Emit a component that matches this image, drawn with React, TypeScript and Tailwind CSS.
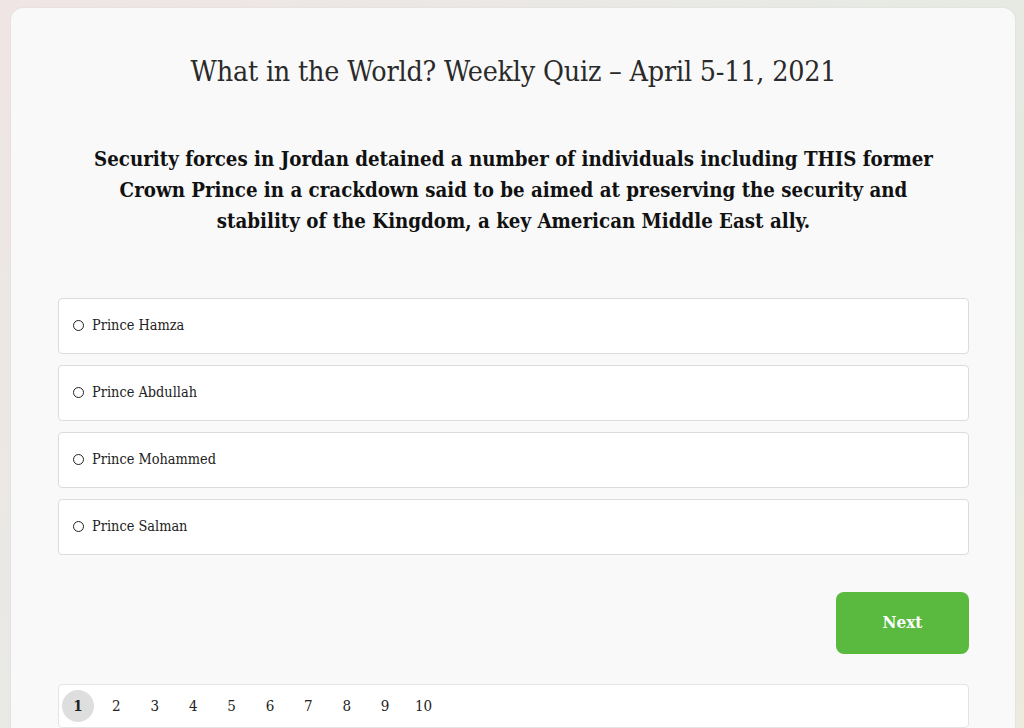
import React from "react";

const options = ["Prince Hamza", "Prince Abdullah", "Prince Mohammed", "Prince Salman"];
const pages = [1, 2, 3, 4, 5, 6, 7, 8, 9, 10];

export default function App() {
  return (
    <div
      className="w-[1024px] h-[728px] overflow-hidden bg-[linear-gradient(135deg,#efe5e4_0%,#e9e9e6_40%,#e4ebe0_75%,#ecebdd_100%)] pt-[8px] pl-[11px] pr-[9px] [font-family:'DejaVu_Serif',serif]"
    >
      <div className="relative h-[760px] rounded-[12px] bg-[#f9f9f9] shadow-[0_0_2px_rgba(0,0,0,0.08)] pl-[47px] pr-[46px] pt-[47px]">
        <h1 className="text-center text-[28.4px] leading-[34px] font-normal text-[#2a2a2a] [font-family:'DejaVu_Serif_Condensed','DejaVu_Serif',serif] tracking-[-0.2px]">
          What in the World? Weekly Quiz – April 5-11, 2021
        </h1>
        <p className="mt-[55px] mx-auto max-w-[856px] text-center text-[20.3px] leading-[31px] font-bold text-[#111] [font-family:'DejaVu_Serif_Condensed','DejaVu_Serif',serif]">
          Security forces in Jordan detained a number of individuals including THIS former Crown Prince in a crackdown said to be aimed at preserving the security and stability of the Kingdom, a key American Middle East ally.
        </p>
        <div className="mt-[61px] flex flex-col gap-[11px]">
          {options.map((o) => (
            <div
              key={o}
              className="h-[56px] flex items-center gap-[8px] rounded-[4px] border border-[#dcdcdc] bg-white pl-[14px] pb-[1px]"
            >
              <span className="w-[11px] h-[11px] rounded-full border-[1.5px] border-[#222]" />
              <span className="text-[14.4px] text-[#222] [font-family:'DejaVu_Serif_Condensed','DejaVu_Serif',serif]">{o}</span>
            </div>
          ))}
        </div>
        <div className="mt-[37px] flex justify-end">
          <button className="w-[133px] h-[62px] rounded-[8px] bg-[#5ab93f] text-white font-bold text-[17px] [font-family:'DejaVu_Serif_Condensed','DejaVu_Serif',serif]">
            Next
          </button>
        </div>
        <div className="mt-[30px] h-[44px] rounded-[4px] border border-[#e4e4e4] bg-white flex items-center pl-[3px]">
          {pages.map((p) => (
            <span
              key={p}
              className={
                "w-[32px] h-[32px] mr-[6.4px] rounded-full flex items-center justify-center text-[15px] text-[#222] [font-family:'DejaVu_Serif_Condensed','DejaVu_Serif',serif] " +
                (p === 1 ? "bg-[#dedede] font-bold" : "")
              }
            >
              {p}
            </span>
          ))}
        </div>
      </div>
    </div>
  );
}
